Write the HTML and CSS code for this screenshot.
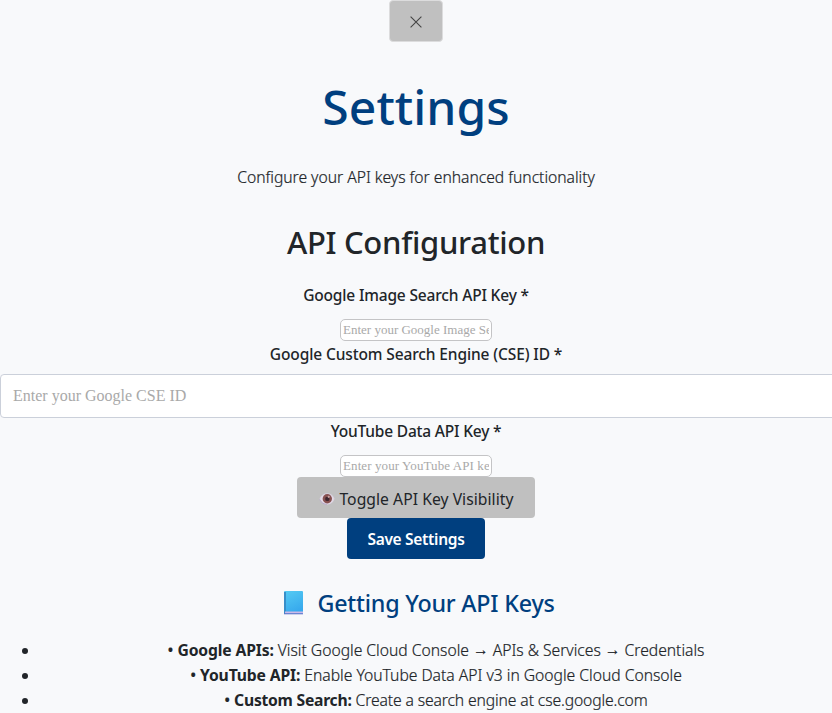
FILE: index.html
```html
<!DOCTYPE html>
<html lang="en">
<head>
<meta charset="utf-8">
<title>Settings</title>
<link rel="stylesheet" href="styles.css">
</head>
<body>
<main class="settings">
  <button class="btn btn-close" aria-label="Close"><svg width="12" height="12" viewBox="0 0 12 12"><path d="M.6.6 11.4 11.4M11.4.6.6 11.4" fill="none" stroke="#444" stroke-width="1.1"/></svg></button>
  <h1 class="title">Settings</h1>
  <p class="intro">Configure your API keys for enhanced functionality</p>
  <h2 class="section-title">API Configuration</h2>
  <label class="label label-image" for="image-key">Google Image Search API Key *</label>
  <input class="key-input" id="image-key" type="text" placeholder="Enter your Google Image Search API key">
  <label class="label label-cse" for="cse-id">Google Custom Search Engine (CSE) ID *</label>
  <input class="wide-input" id="cse-id" type="text" placeholder="Enter your Google CSE ID">
  <label class="label label-youtube" for="youtube-key">YouTube Data API Key *</label>
  <input class="key-input key-input-youtube" id="youtube-key" type="text" placeholder="Enter your YouTube API key">
  <button class="btn btn-toggle">
    <svg class="eye" width="16" height="14" viewBox="0 0 16 14">
      <defs><radialGradient id="white"><stop offset=".4" stop-color="#f5eef5"/><stop offset="1" stop-color="#d5cddd"/></radialGradient></defs>
      <path d="M.5 7C2 3 5 1.300 8.300 1.300S14 3 15.500 6.500C14.500 10.500 11.500 12.700 8 12.700S2 11 .5 7Z" fill="url(#white)"/>
      <path d="M.7 7.500C2.300 11 5 12.300 8 12.300" fill="none" stroke="#b9aacb" stroke-width="1"/>
      <circle cx="8.300" cy="6.700" r="4.700" fill="#875151"/>
      <circle cx="8.300" cy="6.900" r="2.200" fill="#3d2630"/>
      <circle cx="9.700" cy="4.800" r="1.100" fill="#c9a3a3"/>
    </svg>
    <span>Toggle API Key Visibility</span>
  </button>
  <button class="btn btn-save">Save Settings</button>
  <h3 class="help-title">
    <svg width="20" height="24" viewBox="0 0 20 24">
      <defs><linearGradient id="cover" x2=".4" y2="1"><stop stop-color="#55cbf3"/><stop offset="1" stop-color="#37a9ed"/></linearGradient></defs>
      <rect width="19" height="23" rx="1" fill="url(#cover)"/>
      <path d="M0 1h2v22H0z" fill="#388ec9"/>
      <path d="M1 20.500h18v2H1z" fill="#cdb9e8"/>
      <path d="M0 22.300h19v1H0z" fill="#6272c8"/>
    </svg>
    <span>Getting Your API Keys</span>
  </h3>
  <ul class="help-list">
    <li><b class="dot">•</b> <strong>Google APIs:</strong> Visit Google Cloud Console <span class="arrow">→</span> APIs &amp; Services <span class="arrow">→</span> Credentials</li>
    <li><b class="dot">•</b> <strong>YouTube API:</strong> Enable YouTube Data API v3 in Google Cloud Console</li>
    <li class="search-item"><b class="dot">•</b> <strong>Custom Search:</strong> Create a search engine at cse.google.com</li>
  </ul>
</main>
</body>
</html>
```
FILE: styles.css
```css
* { box-sizing: border-box; }
html { overflow: hidden; }
body {
  margin: 0;
  background: #f8f9fb;
  color: #212529;
  font: 300 16px/25px "Noto Sans", "Open Sans", sans-serif;
}
.settings { display: flex; flex-direction: column; align-items: center; text-align: center; }
h1, h2, h3, p, ul { margin: 0; }
h1, h2, h3 { font-weight: 500; white-space: nowrap; }
.btn {
  display: flex; align-items: center; justify-content: center;
  height: 41px; padding: 0; border: 0; border-radius: 4px;
  background: #c0c0c0; color: #212529;
  font: 400 16px/24px "Noto Sans", sans-serif; white-space: nowrap;
}
.btn-close { width: 54px; height: 42px; border: 1px solid #dcdcdd; padding-top: 2px; }
.title { margin-top: 35px; font-size: 48px; line-height: 60px; letter-spacing: .05px; color: #003f7f; }
.intro { margin-top: 28px; font-size: 15.7px; letter-spacing: -.03px; -webkit-text-stroke: .2px #212529; }
.section-title { margin-top: 32px; font-size: 31px; line-height: 40px; letter-spacing: -.3px; }
.label { font-weight: 500; font-size: 15.5px; line-height: 24px; }
.label-image { margin-top: 21px; letter-spacing: -.17px; }
.label-cse { margin-top: 1px; letter-spacing: -.12px; }
.label-youtube { margin-top: 1px; letter-spacing: -.2px; }
input { font-family: "Liberation Serif", serif; background: #fff; }
input::placeholder { color: #a9a9a9; opacity: 1; }
.key-input {
  width: 152px; height: 22px; margin-top: 12px; padding: 1px 2px;
  border: 1px solid #c4c4c6; border-radius: 5px; font-size: 13px;
}
.key-input-youtube { letter-spacing: .1px; }
.wide-input {
  align-self: flex-start; width: 858px; height: 44px; margin-top: 8px; padding: 0 12px;
  border: 1px solid #cbd0da; border-radius: 4px; font-size: 16px;
}
.btn-toggle { width: 238px; gap: 4px; padding: 2px 0 0 1px; font-size: 15.7px; letter-spacing: .04px; }
.btn-save {
  width: 138px; background: #003f7f; color: #fff;
  font-weight: 600; font-size: 15.5px; letter-spacing: -.3px;
}
.help-title {
  display: flex; align-items: center; gap: 13px; margin-top: 29px; padding-left: 7px;
  font-size: 23.3px; line-height: 30px; letter-spacing: -.22px; color: #003f7f;
}
.help-list {
  width: 100%; margin-top: 20px; padding: 0; list-style: none;
  font-size: 15.7px; letter-spacing: -.02px; -webkit-text-stroke: .2px #212529;
}
.help-list li { display: flow-root; padding-left: 40px; white-space: nowrap; }
.help-list li::before {
  content: ""; float: left; width: 6px; height: 6px; margin: 10px 0 0 -18px;
  border-radius: 50%; background: #212529;
}
.help-list strong { font-weight: 700; letter-spacing: -.15px; -webkit-text-stroke: 0; }
.help-list .search-item { letter-spacing: -.12px; }
.help-list .search-item strong { letter-spacing: -.25px; }
.help-list .dot { font-weight: 500; }
.arrow { display: inline-block; transform: translateY(-1px); }
```
